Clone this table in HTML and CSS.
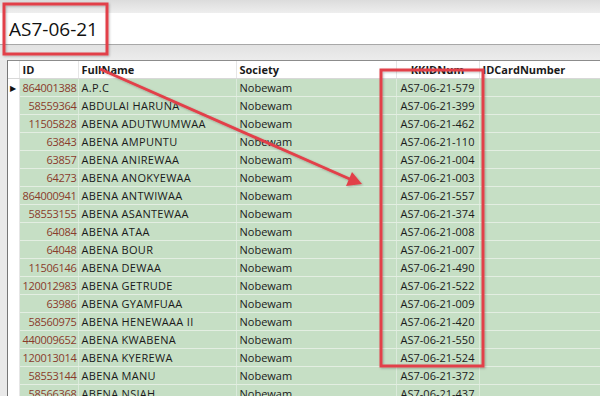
FILE: index.html
```html
<!DOCTYPE html>
<html lang="en">
<head>
    <meta charset="UTF-8">
    <title>Members</title>
    <link rel="stylesheet" href="styles.css">
</head>
<body>

    <div class="top-strip"></div>
    <div class="search-box">AS7-06-21</div>
    <div class="band"></div>

    <div class="grid">
        <table>
            <colgroup>
                <col class="c-row">
                <col class="c-id">
                <col class="c-name">
                <col class="c-soc">
                <col class="c-kk">
                <col>
            </colgroup>
            <thead>
                <tr>
                    <th></th>
                    <th>ID</th>
                    <th>FullName</th>
                    <th>Society</th>
                    <th class="kk-head">KKIDNum</th>
                    <th>IDCardNumber</th>
                </tr>
            </thead>
            <tbody id="rows"></tbody>
        </table>
    </div>

    <!-- annotations drawn over the screenshot -->
    <svg class="marks" width="600" height="396" viewBox="0 0 600 396">
        <defs>
            <filter id="sh" x="-10%" y="-10%" width="120%" height="120%">
                <feDropShadow dx="1" dy="1" stdDeviation="1" flood-color="#000" flood-opacity="0.25"/>
            </filter>
        </defs>
        <g fill="none" stroke="#e2404a" stroke-width="3" filter="url(#sh)">
            <rect x="4" y="4" width="103" height="50"/>
            <rect x="381" y="70" width="102" height="296"/>
            <line x1="100" y1="69" x2="352" y2="180"/>
        </g>
        <polygon points="362,184 346,186 352,172" fill="#e2404a" filter="url(#sh)"/>
    </svg>

    <script>
        var data = [
            ["864001388", "A.P.C", "579"],
            ["58559364", "ABDULAI HARUNA", "399"],
            ["11505828", "ABENA ADUTWUMWAA", "462"],
            ["63843", "ABENA AMPUNTU", "110"],
            ["63857", "ABENA ANIREWAA", "004"],
            ["64273", "ABENA ANOKYEWAA", "003"],
            ["864000941", "ABENA ANTWIWAA", "557"],
            ["58553155", "ABENA ASANTEWAA", "374"],
            ["64084", "ABENA ATAA", "008"],
            ["64048", "ABENA BOUR", "007"],
            ["11506146", "ABENA DEWAA", "490"],
            ["120012983", "ABENA GETRUDE", "522"],
            ["63986", "ABENA GYAMFUAA", "009"],
            ["58560975", "ABENA HENEWAAA II", "420"],
            ["440009652", "ABENA KWABENA", "550"],
            ["120013014", "ABENA KYEREWA", "524"],
            ["58553144", "ABENA MANU", "372"],
            ["58566368", "ABENA NSIAH", "437"]
        ];

        var body = document.getElementById("rows");
        data.forEach(function(r, i) {
            var tr = document.createElement("tr");
            tr.innerHTML =
                '<td class="row-head">' + (i === 0 ? '&#9654;' : '') + '</td>' +
                '<td class="id">' + r[0] + '</td>' +
                '<td class="name">' + r[1] + '</td>' +
                '<td>Nobewam</td>' +
                '<td class="kk">AS7-06-21-' + r[2] + '</td>' +
                '<td></td>';
            body.appendChild(tr);
        });
    </script>

</body>
</html>
```

FILE: styles.css
```css
body {
    margin: 0;
    width: 600px;
    height: 396px;
    overflow: hidden;
    background-color: #e9e9e9;
    font-family: "Open Sans", "Noto Sans", sans-serif;
    font-size: 11px;
    color: #1a1a1a;
    position: relative;
}
.top-strip {
    height: 13px;
    background: linear-gradient(#dcdcdc, #eeeeee);
}
.search-box {
    height: 31px;
    background: white;
    font-size: 19px;
    line-height: 32px;
    padding-left: 9px;
    color: #111;
    border-bottom: 1px solid #a8a8a8;
}
.band {
    height: 15px;
    background: linear-gradient(#e2e2e2, #ececec);
}
.grid {
    margin-left: 7px;
    border-left: 1px solid #777;
    border-top: 1px solid #8c8c8c;
    background: white;
    height: 340px;
}
table {
    border-collapse: collapse;
    table-layout: fixed;
    width: 593px;
}
.c-row { width: 11px; }
.c-id { width: 59px; }
.c-name { width: 158px; }
.c-soc { width: 160px; }
.c-kk { width: 83px; }
th {
    height: 17px;
    padding: 0 3px;
    text-align: left;
    font-weight: bold;
    background: white;
    border-right: 1px solid #e6e6e6;
    border-bottom: 1px solid #d8d8d8;
    white-space: nowrap;
    overflow: hidden;
}
th.kk-head {
    text-align: center;
}
td {
    height: 17px;
    padding: 0 3px;
    background-color: #c6dfc5;
    border-right: 1px solid #dbeadb;
    border-bottom: 1px solid #e3eee2;
    white-space: nowrap;
    overflow: hidden;
}
td.row-head {
    background: white;
    padding: 0;
    font-size: 8px;
    text-align: center;
    color: #111;
    border-right: 1px solid #e6e6e6;
    border-bottom: none;
}
td.id {
    text-align: right;
    color: #8a3b2c;
    padding: 0 1px 0 0;
    letter-spacing: -0.3px;
}
td.name {
    letter-spacing: 0.3px;
}
td.kk {
    text-align: center;
}
.marks {
    position: absolute;
    left: 0;
    top: 0;
    pointer-events: none;
}
```
